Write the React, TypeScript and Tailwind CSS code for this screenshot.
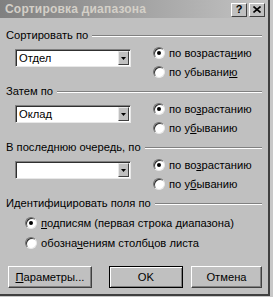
import React from "react";

const font = { fontFamily: '"Liberation Sans", Arial, sans-serif' };

const Groove = () => (
  <div className="flex-1 h-[2px] border-t border-t-[#808080] border-b border-b-white mt-[2px]" />
);

const GroupLabel = ({ text }: { text: string }) => (
  <div className="flex items-center gap-[4px] h-[14px]">
    <span className="text-[11.2px] leading-[14px] text-black whitespace-nowrap">{text}</span>
    <Groove />
  </div>
);

const Radio = ({ checked, children }: { checked?: boolean; children: React.ReactNode }) => (
  <div className="flex items-center gap-[4px] h-[18px]">
    <span className="w-[12px] h-[12px] rounded-full bg-white border border-t-[#707070] border-l-[#707070] border-r-[#e8e8e8] border-b-[#e8e8e8] shadow-[inset_1px_1px_0_#303030] flex items-center justify-center shrink-0">
      {checked ? <span className="w-[4px] h-[4px] rounded-full bg-black" /> : null}
    </span>
    <span className="text-[11.2px] leading-[14px] text-black whitespace-nowrap">{children}</span>
  </div>
);

const Combo = ({ value }: { value: string }) => (
  <div className="w-[116px] h-[18px] flex bg-white border border-t-[#808080] border-l-[#808080] border-r-[#e8e8e8] border-b-[#e8e8e8] shadow-[inset_1px_1px_0_#303030]">
    <div className="flex-1 text-[11.2px] leading-[16px] pl-[3px] text-black">{value}</div>
    <div className="w-[11px] h-[14px] mt-[1px] mr-[1px] bg-[#c0c0c0] border border-t-[#e8e8e8] border-l-[#e8e8e8] border-r-[#404040] border-b-[#404040] flex items-center justify-center">
      <svg width="5" height="3" viewBox="0 0 5 3">
        <path d="M0 0h5L2.5 3z" fill="#000" />
      </svg>
    </div>
  </div>
);

const SortBlock = ({
  label,
  value,
  asc,
  desc,
}: {
  label: string;
  value: string;
  asc: React.ReactNode;
  desc: React.ReactNode;
}) => (
  <div>
    <GroupLabel text={label} />
    <div className="flex mt-[2px]">
      <div className="ml-[9px] mt-[5px]">
        <Combo value={value} />
      </div>
      <div className="ml-[22px] flex flex-col gap-[1px]">
        <Radio checked>{asc}</Radio>
        <Radio>{desc}</Radio>
      </div>
    </div>
  </div>
);

const Button = ({ children, main }: { children: React.ReactNode; main?: boolean }) => (
  <div
    className={
      "h-[22px] flex items-center justify-center text-[11.2px] text-black bg-[#c0c0c0] " +
      (main
        ? "border border-black shadow-[inset_1px_1px_0_#ffffff,inset_-1px_-1px_0_#808080]"
        : "border border-t-white border-l-white border-r-[#404040] border-b-[#404040] shadow-[inset_-1px_-1px_0_#808080]")
    }
  >
    {children}
  </div>
);

export default function App() {
  return (
    <div className="w-[273px] h-[297px] bg-[#c8c8c8] overflow-hidden" style={font}>
      <div className="w-[270px] h-[296px] flex flex-col bg-[#c0c0c0] border-r-2 border-r-[#404040] border-b-2 border-b-[#404040]">
        {/* Title bar */}
        <div className="h-[18px] flex items-center justify-between pl-[5px] pr-[3px] bg-gradient-to-r from-[#808080] to-[#c4c4c4]">
          <span className="text-[12px] font-bold text-[#d4d0c8] tracking-[0.2px]">Сортировка диапазона</span>
          <div className="flex gap-[2px] mt-[1px]">
            <div className="w-[16px] h-[14px] bg-[#c0c0c0] border border-t-white border-l-white border-r-[#404040] border-b-[#404040] flex items-center justify-center text-[11px] font-bold leading-none text-black">
              ?
            </div>
            <div className="w-[16px] h-[14px] bg-[#c0c0c0] border border-t-white border-l-white border-r-[#404040] border-b-[#404040] flex items-center justify-center">
              <svg width="8" height="7" viewBox="0 0 8 7">
                <path d="M0.5 0.5L7.5 6.5M7.5 0.5L0.5 6.5" stroke="#000" strokeWidth="1.6" />
              </svg>
            </div>
          </div>
        </div>

        {/* Body */}
        <div className="flex flex-col pl-[6px] pr-[6px] pt-[10px]">
          <SortBlock
            label="Сортировать по"
            value="Отдел"
            asc={
              <>
                по возраста<u>н</u>ию
              </>
            }
            desc={
              <>
                по убывани<u>ю</u>
              </>
            }
          />
          <div className="mt-[3px]">
            <SortBlock
              label="Затем по"
              value="Оклад"
              asc={
                <>
                  по во<u>з</u>растанию
                </>
              }
              desc={
                <>
                  по у<u>б</u>ыванию
                </>
              }
            />
          </div>
          <div className="mt-[3px]">
            <SortBlock
              label="В последнюю очередь, по"
              value=""
              asc={
                <>
                  по во<u>з</u>растанию
                </>
              }
              desc={
                <>
                  по у<u>б</u>ыванию
                </>
              }
            />
          </div>

          <div className="mt-[3px]">
            <GroupLabel text="Идентифицировать поля по" />
            <div className="ml-[19px] mt-[4px] flex flex-col gap-[2px]">
              <Radio checked>
                <u>п</u>одписям (первая строка диапазона)
              </Radio>
              <Radio>
                обозна<u>ч</u>ениям столбцов листа
              </Radio>
            </div>
          </div>

          <div className="mt-[14px] flex">
            <div className="w-[85px] ml-[2px]">
              <Button>
                <u>П</u>араметры...
              </Button>
            </div>
            <div className="w-[75px] ml-[17px]">
              <Button main>OK</Button>
            </div>
            <div className="w-[72px] ml-[8px]">
              <Button>Отмена</Button>
            </div>
          </div>
        </div>
      </div>
    </div>
  );
}
